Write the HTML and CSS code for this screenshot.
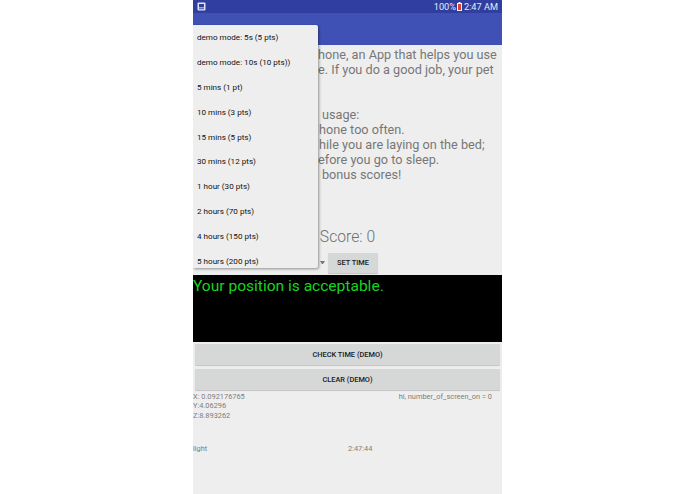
FILE: index.html
```html
<!DOCTYPE html>
<html lang="en">
<head>
<meta charset="utf-8">
<title>Score screen</title>
<link rel="stylesheet" href="styles.css">
</head>
<body>
<div class="phone">
  <header class="status">
    <svg class="screen-icon" width="9" height="9" viewBox="0 0 9 9"><rect x="0.5" y="0.5" width="8" height="8" rx="1" fill="#dfe3f4"/><rect x="2" y="2" width="5" height="3.4" fill="#303f9f"/><rect x="2" y="6.3" width="5" height="0.9" fill="#303f9f"/></svg>
    <span class="status-right">100%
      <svg class="battery" width="5" height="9" viewBox="0 0 5 9"><rect x="1.5" y="0" width="2" height="1" fill="#f4f4f4"/><rect x="0" y="1" width="5" height="8" fill="#f4f4f4"/><rect x="1" y="2" width="3" height="6" fill="#d8432f"/></svg>
      2:47 AM</span>
  </header>
  <div class="appbar"></div>
  <main class="content">
    <div class="intro">
      <div>hone, an App that helps you use</div>
      <div>e. If you do a good job, your pet</div>
      <div class="blank"></div>
      <div class="blank"></div>
      <div class="i4">usage:</div>
      <div class="i1">hone too often.</div>
      <div class="i1">hile you are laying on the bed;</div>
      <div>efore you go to sleep.</div>
      <div class="i4">bonus scores!</div>
    </div>
    <div class="score">Score: 0</div>
    <div class="time-row">
      <span class="spinner-arrow"></span>
      <button class="btn set-time">SET TIME</button>
    </div>
    <div class="message">Your position is acceptable.</div>
    <div class="actions">
      <button class="btn wide">CHECK TIME (DEMO)</button>
      <button class="btn wide">CLEAR (DEMO)</button>
    </div>
    <div class="readings">
      <div>X: 0.092176765<br>Y:4.06296<br>Z:8.893262</div>
      <div class="counter">hi, number_of_screen_on = 0</div>
    </div>
    <div class="light-row">
      <span class="light">light</span>
      <span class="clock">2:47:44</span>
    </div>
  </main>
  <ul class="menu">
    <li>demo mode: 5s (5 pts)</li>
    <li>demo mode: 10s (10 pts))</li>
    <li>5 mins (1 pt)</li>
    <li>10 mins (3 pts)</li>
    <li>15 mins (5 pts)</li>
    <li>30 mins (12 pts)</li>
    <li>1 hour (30 pts)</li>
    <li>2 hours (70 pts)</li>
    <li>4 hours (150 pts)</li>
    <li>5 hours (200 pts)</li>
  </ul>
</div>
</body>
</html>
```
FILE: styles.css
```css
* { box-sizing: border-box; }
html, body { margin: 0; padding: 0; background: #fff; }
body { font-family: Roboto, "Liberation Sans", sans-serif; height: 494px; overflow: hidden; }
.phone { position: relative; width: 309px; height: 494px; margin: 0 auto; background: #eeeeee; overflow: hidden; }
.status { height: 13px; background: #303f9f; color: #e8eaf6; display: flex; align-items: center; justify-content: space-between; padding: 0 4px; font-size: 9.2px; }
.status-right { display: flex; align-items: center; gap: 1.5px; }
.screen-icon { display: block; }
.battery { display: block; }
.appbar { height: 32px; background: #3f51b5; }
.content { display: flex; flex-direction: column; }
.intro { margin-top: 2px; height: 176px; padding-left: 125px; font-size: 12.7px; line-height: 15px; color: #777; white-space: nowrap; }
.blank { height: 15px; }
.i1 { padding-left: 1px; }
.i4 { padding-left: 4px; }
.score { height: 27px; text-align: center; font-size: 15.7px; font-weight: 300; line-height: 27px; color: #6f6f6f; }
.time-row { height: 25px; display: flex; align-items: center; padding-left: 127px; gap: 3px; }
.spinner-arrow { flex: none; width: 5px; height: 3px; border-left: 2.5px solid transparent; border-right: 2.5px solid transparent; border-top: 3px solid #777; }
.btn { border: 0; background: #d6d7d7; color: #1a1a1a; font-family: inherit; font-weight: 500; font-size: 7.4px; border-radius: 1px; box-shadow: 0 1px 1px rgba(0,0,0,.18); padding: 0; }
.set-time { width: 50px; height: 20px; }
.message { height: 67px; background: #000; color: #18d420; font-size: 15.55px; line-height: 23px; }
.actions { display: flex; flex-direction: column; gap: 4px; padding: 2px 2px 0; }
.wide { height: 21px; width: 100%; }
.readings { display: flex; justify-content: space-between; padding: 2px 10px 0 0; font-size: 7.4px; line-height: 9.3px; color: #7d7d7d; }
.light-row { display: flex; margin-top: 24px; font-size: 7.4px; line-height: 9px; color: #7d7d7d; }
.light { width: 155px; }
.menu { position: absolute; left: 0; top: 25px; width: 125px; height: 243px; margin: 0; padding: 0; list-style: none; background: #eeeeee; box-shadow: 1px 1px 3px rgba(0,0,0,.4); overflow: hidden; border-radius: 0 2px 2px 0; }
.menu li { height: 24.8px; display: flex; align-items: center; padding-left: 4px; font-size: 8.1px; color: #111; }
```
